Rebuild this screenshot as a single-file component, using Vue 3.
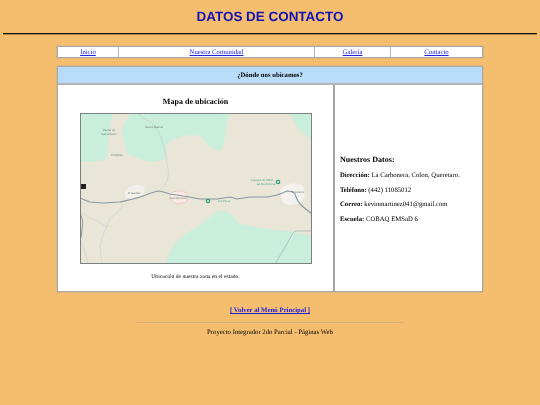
<template>
  <div class="page">
    <h1 class="title">DATOS DE CONTACTO</h1>
    <hr class="rule" />

    <nav class="nav">
      <a v-for="item in navItems" :key="item" href="#" class="nav-cell">{{ item }}</a>
    </nav>

    <section class="panel">
      <header class="panel-head">¿Dónde nos ubicamos?</header>
      <div class="panel-body">
        <div class="map-cell">
          <h2 class="map-title">Mapa de ubicación</h2>
          <svg class="map" viewBox="0 0 232 151" width="232" height="151">
            <rect width="232" height="151" fill="#e9e6d8" />
            <!-- green areas -->
            <path d="M0 0H33C30 14 28 32 26 46C18 50 8 49 0 48Z" fill="#c9eedb" />
            <path d="M52 0H152L148 4C146 12 146 20 145 24C143 32 142 38 140 38L130 34L120 23C112 21 106 22 100 24C94 26 88 30 87 31L85 46C78 49 72 49 67 48L47 41L42 18C44 10 48 4 52 0Z" fill="#c9eedb" />
            <path d="M210 0H232V28L217 14Z" fill="#c9eedb" />
            <path d="M85 151C88 145 90 139 93 134C97 128 101 124 105 121L120 112L137 99C140 97 148 98 153 103L160 111L187 116L213 119L232 123V151Z" fill="#c9eedb" />
            <!-- towns -->
            <path d="M200 78C202 72 212 69 220 71C226 74 226 84 222 88C216 93 206 94 202 88Z" fill="#f3f2ee" />
            <path d="M45 78C48 72 60 70 64 74C66 80 62 86 54 86C48 86 44 84 45 78Z" fill="#f1f0ec" />
            <path d="M90 82C92 78 100 77 105 79C109 83 108 89 103 90C97 92 91 90 90 82Z" fill="#f8ebe6" stroke="#eaa9a2" stroke-width="0.5" />
            <!-- roads -->
            <path d="M58 1C63 5 69 8 73 11C79 18 81 24 83 31C86 38 86 46 87 51C88 56 89 60 88 64C87 70 84 74 80 76" fill="none" stroke="#b3bdc0" stroke-width="0.4" />
            <path d="M0 99C5 102 9 104 13 106C19 109 24 112 28 114M43 93C39 98 34 102 30 106C26 114 22 124 20 133C20 140 22 145 22 150M0 126C3 132 6 142 8 151" fill="none" stroke="#b8cbd2" stroke-width="0.5" />
            <path d="M232 118H215C212 121 210 125 208 129L195 151" fill="none" stroke="#a5abb0" stroke-width="0.7" />
            <path d="M0 100C3 106 3 112 2 116C2 120 1 124 0 128" fill="none" stroke="#8b949c" stroke-width="1" />
            <path d="M0 85C4 87 7 88 10 89L23 90L40 89C48 87 55 86 63 83C68 81 73 79 78 78C82 78 86 80 90 81L103 83C110 84 115 85 120 86H137L150 84L157 86L170 84H187C192 83 196 83 200 81L207 78C211 78 214 79 215 81C216 85 218 88 220 91C224 95 228 98 232 101" fill="none" stroke="#8b97a3" stroke-width="1.1" />
            <circle cx="198" cy="69" r="1.7" fill="none" stroke="#2f9e78" stroke-width="1.2" />
            <circle cx="128" cy="88" r="1.7" fill="none" stroke="#2f9e78" stroke-width="1.2" />
            <rect x="0" y="71" width="6" height="5" fill="#222" />
            <g class="map-label" text-anchor="middle">
              <text x="29" y="18">Puerto de</text>
              <text x="29" y="22">San Antonio</text>
              <text x="74" y="15">Nuevo Ramos</text>
              <text x="37" y="43">El Molino</text>
              <text x="54" y="81">El Gavilán</text>
              <text x="98" y="86">La Carbonera</text>
              <text x="218" y="80">El Lindero</text>
            </g>
            <g class="map-label green" text-anchor="middle">
              <text x="182" y="68">Campos de fútbol</text>
              <text x="186" y="72">las Nochebena</text>
              <text x="144" y="89">Los Pinos</text>
            </g>
            <rect x=".5" y=".5" width="231" height="150" fill="none" stroke="#7c807c" />
          </svg>
          <p class="map-note">Ubicación de nuestra zona en el estado.</p>
        </div>
        <div class="data-cell">
          <h3 class="data-title">Nuestros Datos:</h3>
          <p v-for="row in dataRows" :key="row.label" class="data-row">
            <strong>{{ row.label }}</strong> {{ row.value }}
          </p>
        </div>
      </div>
    </section>

    <a href="#" class="back">[ Volver al Menú Principal ]</a>
    <hr class="foot-rule" />
    <p class="foot">Proyecto Integrador 2do Parcial - Páginas Web</p>
  </div>
</template>

<script setup>
const navItems = ['Inicio', 'Nuestra Comunidad', 'Galería', 'Contacto']

const dataRows = [
  { label: 'Dirección:', value: 'La Carbonera, Colon, Queretaro.' },
  { label: 'Teléfono:', value: '(442) 11085012' },
  { label: 'Correo:', value: 'kevinmartinez041@gmail.com' },
  { label: 'Escuela:', value: 'COBAQ EMSaD 6' }
]
</script>

<style>
html, body {
  margin: 0;
  background: #f5bd6e;
}
</style>

<style scoped>
.page {
  height: 405px;
  overflow: hidden;
  font-family: "Liberation Serif", serif;
  color: #000;
  background: #f5bd6e;
  text-rendering: geometricPrecision;
  filter: blur(0.3px);
}

.title {
  margin: 0;
  padding-top: 8px;
  height: 25px;
  font: bold 13.44px/17px "Liberation Sans", Arial, sans-serif;
  text-align: center;
  color: #1010b8;
}

.rule {
  margin: 0 3px;
  height: 1px;
  border: 0;
  background: #111;
  box-shadow: 0 1px 0 rgba(0, 0, 0, .3);
}

.nav {
  display: grid;
  grid-template-columns: 60px 195px 75px 91px;
  gap: 1px;
  width: 424px;
  margin: 12px auto 0;
  background: #b4b4b4;
  border: 1px solid #a9a9a9;
  box-shadow: 0 0 0 1px rgba(170, 170, 170, .3);
}

.nav-cell {
  height: 10px;
  font-size: 6.72px;
  line-height: 11px;
  text-align: center;
  color: #2020dd;
  background: #fff;
}

.panel {
  width: 426px;
  margin: 8px auto 0;
  box-sizing: border-box;
  border: 1px solid #a9a9a9;
  box-shadow: 0 0 0 1px rgba(170, 170, 170, .3);
  background: #fff;
}

.panel-head {
  height: 16px;
  font-size: 6.72px;
  font-weight: bold;
  line-height: 18px;
  text-align: center;
  background: #b9dcfb;
  border-bottom: 2px solid #b5b5b5;
}

.panel-body {
  display: flex;
  height: 206px;
}

.map-cell {
  width: 275px;
  border-right: 2px solid #a5a5a5;
  text-align: center;
}

.map-title {
  margin: 11px 0 6px;
  font-size: 8.06px;
  line-height: 11px;
}

.map {
  display: block;
  width: 232px;
  height: 151px;
  margin: 0 auto;
}

.map-label {
  font-family: "Liberation Sans", sans-serif;
  font-size: 2.8px;
  fill: #6f7770;
}

.map-label.green {
  fill: #4aa58a;
}

.map-note {
  margin: 9px 0 0;
  font-size: 5.6px;
  line-height: 8px;
}

.data-cell {
  flex: 1;
  padding: 69px 0 0 5px;
}

.data-title {
  margin: 0 0 7px;
  font-size: 8.06px;
  line-height: 11px;
}

.data-row {
  margin: 0 0 6px;
  font-size: 6.72px;
  line-height: 8.5px;
}

.back {
  display: block;
  margin-top: 14px;
  font-size: 6.72px;
  font-weight: bold;
  line-height: 9px;
  text-align: center;
  color: #2020dd;
}

.foot-rule {
  width: 268px;
  height: 1px;
  margin: 7px auto 0;
  border: 0;
  background: #d8ae78;
}

.foot {
  margin: 5px 0 0;
  font-size: 6.72px;
  line-height: 9px;
  text-align: center;
}
</style>
